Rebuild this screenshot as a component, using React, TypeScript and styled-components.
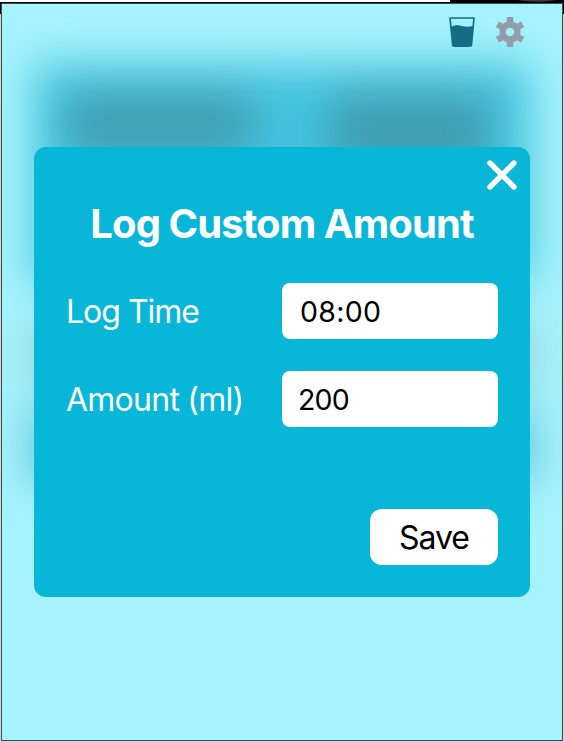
import React from "react";
import styled, { createGlobalStyle } from "styled-components";

const GlobalStyle = createGlobalStyle`
  * { box-sizing: border-box; }
  body {
    margin: 0;
    overflow: hidden;
    font-family: Inter, "Liberation Sans", sans-serif;
  }
`;

const Desktop = styled.div`
  position: relative;
  width: 564px;
  height: 742px;
  padding: 3px 1px 1px;
  background:
    radial-gradient(ellipse 20px 2px at 537px 0, #3a3a3a 70%, transparent) no-repeat,
    linear-gradient(#fff, #fff) 0 0 / 450px 2px no-repeat,
    linear-gradient(#000, #000) 0 0 / 100% 14px no-repeat,
    #d3d6d6;
`;

const Popup = styled.main`
  position: relative;
  display: flex;
  flex-direction: column;
  width: 562px;
  height: 738px;
  border: 1px solid #40494c;
  background: #a5f3fc;
  overflow: hidden;
`;

const BlurredPage = styled.div`
  position: absolute;
  inset: 0;
  display: flex;
  flex-direction: column;
  align-items: center;
  padding-top: 60px;
  filter: blur(22px);
`;

const SummaryPanel = styled.div`
  display: grid;
  grid-template-columns: 186px 160px;
  justify-content: space-between;
  align-items: start;
  width: 496px;
  height: 218px;
  padding: 30px 40px 0 32px;
  background: #43c3de;
`;

const SummaryBlock = styled.div<{ $height: number }>`
  height: ${({ $height }) => $height}px;
  background: #409db1;
`;

const Strip = styled.div<{ $color: string; $height: number; $gap: number }>`
  width: 500px;
  height: ${({ $height }) => $height}px;
  margin-top: ${({ $gap }) => $gap}px;
  background: ${({ $color }) => $color};
`;

const Toolbar = styled.header`
  position: relative;
  display: flex;
  justify-content: flex-end;
  gap: 19px;
  height: 143px;
  padding: 12px 37px 0 0;
  svg { display: block; }
`;

const Dialog = styled.section`
  position: relative;
  width: 496px;
  height: 450px;
  margin-left: 32px;
  padding: 54px 32px 32px;
  display: flex;
  flex-direction: column;
  border-radius: 12px;
  background: #08b6d8;
  color: #fff;
`;

const CloseButton = styled.button`
  position: absolute;
  top: 13px;
  right: 13px;
  width: 30px;
  height: 30px;
  padding: 0;
  border: 0;
  background: none;
  svg { display: block; }
`;

const Title = styled.h1`
  margin: -1px 0 35px;
  height: 48px;
  font-size: 40px;
  line-height: 48px;
  font-weight: 750;
  letter-spacing: -0.92px;
  text-align: center;
  white-space: nowrap;
`;

const Field = styled.label`
  display: grid;
  grid-template-columns: 216px 216px;
  align-items: center;
  height: 56px;
  margin-bottom: 32px;
  font-size: 32px;
  font-weight: 430;
  white-space: nowrap;
`;

const Label = styled.span<{ $spacing: number }>`
  letter-spacing: ${({ $spacing }) => $spacing}px;
`;

const Input = styled.input<{ $indent: number; $spacing: number; $drop: number }>`
  width: 216px;
  height: 56px;
  padding: ${({ $drop }) => $drop}px 16px 0 ${({ $indent }) => $indent}px;
  border: 0;
  border-radius: 8px;
  background: #fff;
  color: #000;
  font: 410 28.5px Inter, sans-serif;
  letter-spacing: ${({ $spacing }) => $spacing}px;
`;

const SaveButton = styled.button`
  align-self: flex-end;
  width: 128px;
  height: 56px;
  margin-top: auto;
  padding: 0;
  border: 0;
  border-radius: 12px;
  background: #fff;
  color: #000;
  font: 420 32px Inter, sans-serif;
  letter-spacing: -1px;
`;

const GlassIcon = () => (
  <svg width="28" height="32" viewBox="0 0 28 32">
    <path d="M2 2h24l-2.600 27.600H4.800Z" fill="none" stroke="#176c84" strokeWidth="1.700" strokeLinejoin="round" />
    <path d="M2.700 11c4-2 7-2.200 11-1.100 5 1.300 8 .8 11.800-.1L23.400 28q-.2 3-2.700 3H7.300Q4.800 31 4.600 28Z" fill="#176c84" />
  </svg>
);

const GearIcon = () => (
  <svg width="30" height="32" viewBox="0 0 30 32">
    <path
      fill="#929dac"
      fillRule="evenodd"
      d="M11.800 1h6.400v4.700q2 .7 3.600 2.100l4.200-2.300 3.200 5.500-4 2.300q.5 2.700 0 5.400l4 2.300-3.200 5.500-4.200-2.300q-1.600 1.400-3.600 2.100V31h-6.400v-4.700q-2-.7-3.600-2.100l-4.200 2.300L.8 21l4-2.300q-.5-2.700 0-5.400L.8 11 4 5.500l4.200 2.300q1.600-1.400 3.600-2.100ZM15 11.800a4.200 4.200 0 1 0 0 8.400 4.200 4.200 0 0 0 0-8.400Z"
    />
  </svg>
);

export default function App() {
  return (
    <>
      <GlobalStyle />
      <Desktop>
        <Popup>
          <BlurredPage aria-hidden="true">
            <SummaryPanel>
              <SummaryBlock $height={60} />
              <SummaryBlock $height={78} />
            </SummaryPanel>
            <Strip $color="#91cfd7" $height={58} $gap={44} />
            <Strip $color="#57c2d5" $height={72} $gap={26} />
          </BlurredPage>
          <Toolbar>
            <GlassIcon />
            <GearIcon />
          </Toolbar>
          <Dialog role="dialog" aria-labelledby="dialog-title">
            <CloseButton aria-label="Close">
              <svg width="30" height="30" viewBox="0 0 30 30">
                <path d="m3 3 24 24M27 3 3 27" stroke="#fff" strokeWidth="5.400" strokeLinecap="round" />
              </svg>
            </CloseButton>
            <Title id="dialog-title">Log Custom Amount</Title>
            <Field>
              <Label $spacing={-1}>Log Time</Label>
              <Input $indent={18} $spacing={0.3} $drop={0} defaultValue="08:00" />
            </Field>
            <Field>
              <Label $spacing={-0.75}>Amount (ml)</Label>
              <Input $indent={16} $spacing={-0.8} $drop={1} defaultValue="200" />
            </Field>
            <SaveButton>Save</SaveButton>
          </Dialog>
        </Popup>
      </Desktop>
    </>
  );
}
